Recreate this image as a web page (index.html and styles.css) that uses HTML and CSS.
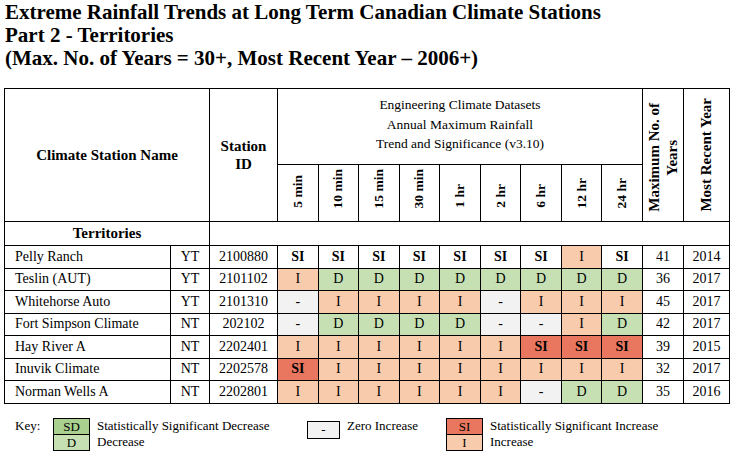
FILE: index.html
```html
<!DOCTYPE html>
<html>
<head>
<meta charset="utf-8">
<link rel="stylesheet" href="styles.css">
</head>
<body>
<div class="page">
  <h1 class="title">Extreme Rainfall Trends at Long Term Canadian Climate Stations<br>Part 2 - Territories<br>(Max. No. of Years = 30+, Most Recent Year – 2006+)</h1>
  <table class="grid">
    <colgroup>
      <col class="c-name"><col class="c-prov"><col class="c-id">
      <col class="c-d"><col class="c-d"><col class="c-d"><col class="c-d"><col class="c-d"><col class="c-d"><col class="c-d"><col class="c-d"><col class="c-d">
      <col class="c-max"><col class="c-year">
    </colgroup>
    <tr class="hr1">
      <th colspan="2" rowspan="2" class="hbold">Climate Station Name</th>
      <th rowspan="2" class="hbold">Station<br>ID</th>
      <th colspan="9" class="eng">Engineering Climate Datasets<br>Annual Maximum Rainfall<br>Trend and Significance (v3.10)</th>
      <th rowspan="2" class="rot-cell big"><div class="rot">Maximum No. of<br>Years</div></th>
      <th rowspan="2" class="rot-cell big"><div class="rot">Most Recent Year</div></th>
    </tr>
    <tr class="hr2">
      <th class="rot-cell"><div class="rot">5 min</div></th>
      <th class="rot-cell"><div class="rot">10 min</div></th>
      <th class="rot-cell"><div class="rot">15 min</div></th>
      <th class="rot-cell"><div class="rot">30 min</div></th>
      <th class="rot-cell"><div class="rot">1 hr</div></th>
      <th class="rot-cell"><div class="rot">2 hr</div></th>
      <th class="rot-cell"><div class="rot">6 hr</div></th>
      <th class="rot-cell"><div class="rot">12 hr</div></th>
      <th class="rot-cell"><div class="rot">24 hr</div></th>
    </tr>
    <tr class="terr-row">
      <td colspan="2" class="terr">Territories</td>
      <td colspan="13"></td>
    </tr>
    <tr class="r">
      <td class="nm">Pelly Ranch</td><td>YT</td><td>2100880</td>
      <td class="b">SI</td><td class="b">SI</td><td class="b">SI</td><td class="b">SI</td><td class="b">SI</td><td class="b">SI</td><td class="b">SI</td><td class="i">I</td><td class="b">SI</td>
      <td>41</td><td>2014</td>
    </tr>
    <tr class="r">
      <td class="nm">Teslin (AUT)</td><td>YT</td><td>2101102</td>
      <td class="i">I</td><td class="d">D</td><td class="d">D</td><td class="d">D</td><td class="d">D</td><td class="d">D</td><td class="d">D</td><td class="d">D</td><td class="d">D</td>
      <td>36</td><td>2017</td>
    </tr>
    <tr class="r">
      <td class="nm">Whitehorse Auto</td><td>YT</td><td>2101310</td>
      <td class="z">-</td><td class="i">I</td><td class="i">I</td><td class="i">I</td><td class="i">I</td><td class="z">-</td><td class="i">I</td><td class="i">I</td><td class="i">I</td>
      <td>45</td><td>2017</td>
    </tr>
    <tr class="r">
      <td class="nm">Fort Simpson Climate</td><td>NT</td><td>202102</td>
      <td class="z">-</td><td class="d">D</td><td class="d">D</td><td class="d">D</td><td class="d">D</td><td class="z">-</td><td class="z">-</td><td class="i">I</td><td class="d">D</td>
      <td>42</td><td>2017</td>
    </tr>
    <tr class="r">
      <td class="nm">Hay River A</td><td>NT</td><td>2202401</td>
      <td class="i">I</td><td class="i">I</td><td class="i">I</td><td class="i">I</td><td class="i">I</td><td class="i">I</td><td class="si">SI</td><td class="si">SI</td><td class="si">SI</td>
      <td>39</td><td>2015</td>
    </tr>
    <tr class="r">
      <td class="nm">Inuvik Climate</td><td>NT</td><td>2202578</td>
      <td class="si">SI</td><td class="i">I</td><td class="i">I</td><td class="i">I</td><td class="i">I</td><td class="i">I</td><td class="i">I</td><td class="i">I</td><td class="i">I</td>
      <td>32</td><td>2017</td>
    </tr>
    <tr class="r">
      <td class="nm">Norman Wells A</td><td>NT</td><td>2202801</td>
      <td class="i">I</td><td class="i">I</td><td class="i">I</td><td class="i">I</td><td class="i">I</td><td class="i">I</td><td class="z">-</td><td class="d">D</td><td class="d">D</td>
      <td>35</td><td>2016</td>
    </tr>
  </table>
  <div class="key">
    <div class="key-label">Key:</div>
    <div class="key-group">
      <div class="boxes"><div class="kbox sd">SD</div><div class="kbox d">D</div></div>
      <div class="labels"><div>Statistically Significant Decrease</div><div>Decrease</div></div>
    </div>
    <div class="key-group">
      <div class="boxes zero"><div class="kbox z">-</div></div>
      <div class="labels"><div>Zero Increase</div></div>
    </div>
    <div class="key-group">
      <div class="boxes"><div class="kbox si-k">SI</div><div class="kbox i">I</div></div>
      <div class="labels"><div>Statistically Significant Increase</div><div>Increase</div></div>
    </div>
  </div>
</div>
</body>
</html>
```
FILE: styles.css
```css
html, body {
  margin: 0;
  padding: 0;
  background: #fff;
  color: #000;
  font-family: "Liberation Serif", "Times New Roman", serif;
}

.page {
  padding: 1px 0 0 4px;
}

.title {
  margin: 0 0 18px 1px;
  font-size: 21px;
  line-height: 23px;
  font-weight: bold;
}

.grid {
  border-collapse: collapse;
  table-layout: fixed;
  width: 725px;
  font-size: 14px;
}

.c-name { width: 166px; }
.c-prov { width: 39px; }
.c-id { width: 68px; }
.c-d { width: 40.55px; }
.c-max { width: 41px; }
.c-year { width: 46px; }

.grid th,
.grid td {
  border: 1px solid #000;
  padding: 0;
  text-align: center;
  vertical-align: middle;
}

.hr1 { height: 76px; }
.hr2 { height: 57px; }
.terr-row { height: 24px; }
.r { height: 22.5px; }

.hbold {
  font-size: 15px;
  font-weight: bold;
  line-height: 18px;
}

.eng {
  font-size: 13.5px;
  font-weight: normal;
  line-height: 19.5px;
  padding-bottom: 4px !important;
}

.rot-cell {
  vertical-align: bottom !important;
  padding-bottom: 13px !important;
  font-size: 13.5px;
  font-weight: bold;
}

.rot-cell.big {
  font-size: 15px;
  padding-bottom: 9px !important;
}

.rot {
  writing-mode: vertical-rl;
  transform: rotate(180deg);
  margin: 0 auto;
  line-height: 18px;
  text-align: center;
  white-space: nowrap;
}

.terr {
  font-weight: bold;
  font-size: 15px;
}

.grid td.nm {
  text-align: left;
  padding-left: 10px;
}

.b { font-weight: bold; }
.i { background: #f8cbad; }
.d { background: #c6e0b4; }
.z { background: #f2f2f2; }
.si { background: #e9775f; font-weight: bold; }

.key {
  display: grid;
  grid-template-columns: 38px 254px 139px auto;
  margin-top: 14px;
  padding-left: 11px;
  font-size: 13px;
}

.key-label {
  line-height: 16px;
}

.key-group {
  display: flex;
  align-items: flex-start;
}

.boxes {
  display: flex;
  flex-direction: column;
  border: 1px solid #000;
  width: 35px;
}

.boxes.zero {
  margin-top: 3px;
  width: 31px;
}

.kbox {
  height: 15px;
  line-height: 15px;
  text-align: center;
}

.kbox + .kbox {
  border-top: 1px solid #000;
}

.kbox.z { height: 16px; line-height: 16px; }
.kbox.sd { background: #a9d08e; }
.kbox.d { background: #c6e0b4; }
.kbox.z { background: #f2f2f2; }
.kbox.si-k { background: #e9775f; }
.kbox.i { background: #f8cbad; }

.labels {
  margin-left: 7px;
  line-height: 16px;
}
```
